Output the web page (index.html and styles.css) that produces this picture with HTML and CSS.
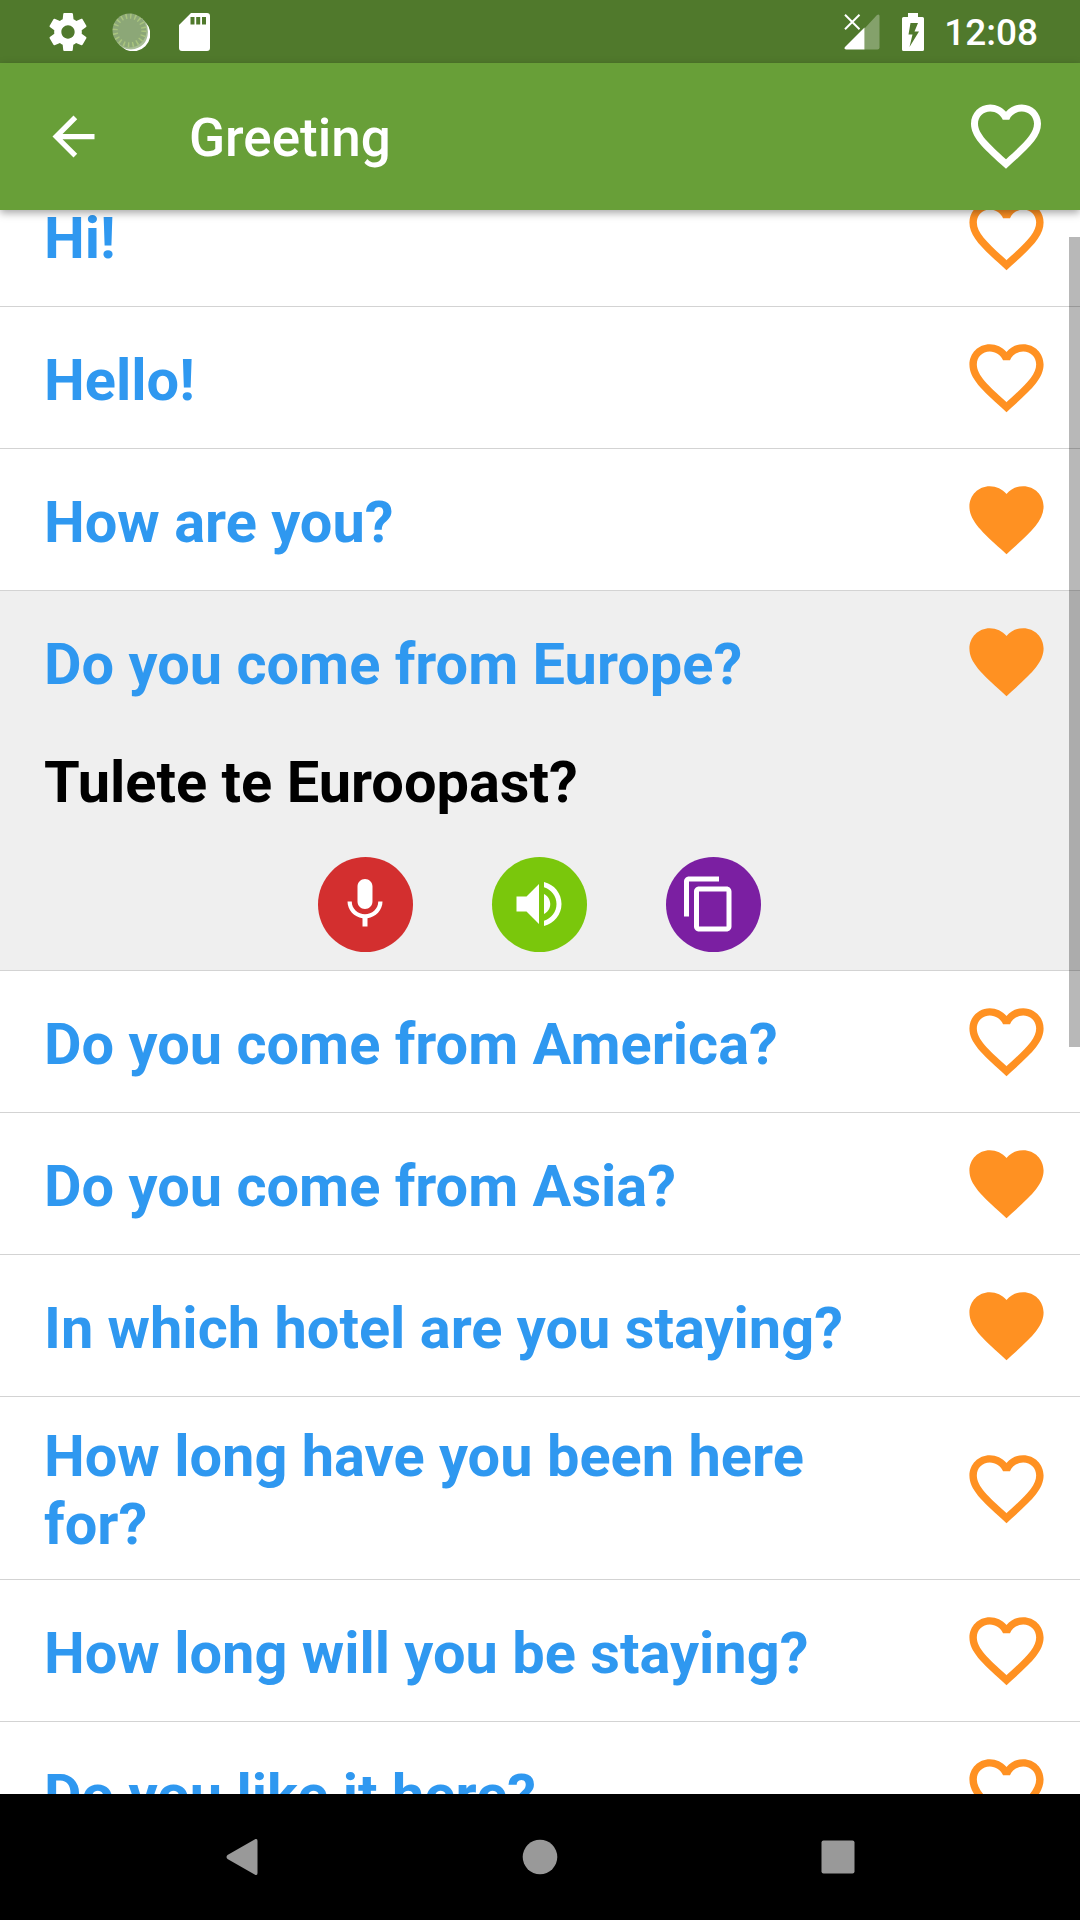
FILE: index.html
```html
<!DOCTYPE html>
<html lang="en">
<head>
    <meta charset="UTF-8">
    <meta name="viewport" content="width=device-width, initial-scale=1.0">
    <title>Greeting</title>
    <link rel="stylesheet" href="styles.css">
</head>
<body>

    <!-- Shared heart icons -->
    <svg class="icon-defs">
        <symbol id="heart-border" viewBox="0 0 24 24">
            <path d="M16.5 3c-1.74 0-3.41.81-4.5 2.09C10.91 3.81 9.24 3 7.5 3 4.42 3 2 5.42 2 8.5c0 3.78 3.4 6.86 8.55 11.54L12 21.35l1.45-1.32C18.6 15.36 22 12.28 22 8.5 22 5.42 19.58 3 16.5 3zm-4.4 15.55l-.1.1-.1-.1C7.14 14.24 4 11.39 4 8.5 4 6.5 5.5 5 7.5 5c1.54 0 3.04.99 3.57 2.36h1.87C13.46 5.99 14.96 5 16.5 5c2 0 3.5 1.5 3.5 3.5 0 2.89-3.14 5.74-7.9 10.05z"/>
        </symbol>
        <symbol id="heart" viewBox="0 0 24 24">
            <path d="M12 21.35l-1.45-1.32C5.4 15.36 2 12.28 2 8.5 2 5.42 4.42 3 7.5 3c1.74 0 3.41.81 4.5 2.09C13.09 3.81 14.76 3 16.5 3 19.58 3 22 5.42 22 8.5c0 3.78-3.4 6.86-8.55 11.54L12 21.35z"/>
        </symbol>
    </svg>

    <div class="screen">
        <!-- Status bar -->
        <div class="status-bar">
            <div class="status-left">
                <svg class="icon-gear" viewBox="2 2 20 20">
                    <path d="M19.2 12.980c.04-.32.07-.64.07-.98s-.03-.66-.07-.98l2.340-1.650c.19-.15.24-.42.12-.64l-2-3.460c-.12-.22-.39-.3-.61-.22l-2.700 1.150c-.4-.35-.9-.65-1.450-.95L14.600 2.420C14.460 2.180 14.250 2 14 2h-4c-.25 0-.46.18-.49.42l-.3 2.830c-.55.3-1.050.6-1.450.95l-2.810-1.150c-.23-.09-.49 0-.61.22l-2 3.460c-.13.22-.07.49.12.64l2.340 1.650c-.04.32-.07.65-.07.98s.03.66.07.98l-2.340 1.650c-.19.15-.24.42-.12.64l2 3.460c.12.22.39.3.61.22l2.810-1.150c.4.35.9.65 1.450.95l.3 2.830c.03.24.24.42.49.42h4c.25 0 .46-.18.49-.42l.3-2.830c.55-.3 1.050-.6 1.450-.95l2.810 1.150c.23.09.49 0 .61-.22l2-3.460c.12-.22.07-.49-.12-.64zM12 15.500c-1.930 0-3.500-1.570-3.500-3.500s1.570-3.500 3.500-3.500 3.500 1.570 3.500 3.500-1.570 3.500-3.500 3.500z"/>
                </svg>
                <svg class="icon-sync" viewBox="0 0 38 38">
                    <circle cx="20" cy="20" r="17.5" fill="#a9bf96"/>
                    <path d="M34 10A17 17 0 0 1 10 34Q14 36.500 19 36.500Q35 35 36 19Q36 14 34 10z" fill="#fff"/>
                    <circle cx="17.5" cy="17.5" r="17" fill="#8ca777"/>
                    <circle cx="17.5" cy="17.5" r="14.3" fill="none" stroke="#a9c47e" stroke-width="5" stroke-dasharray="1.5 3"/>
                </svg>
                <svg class="icon-sd" viewBox="0 0 31 38">
                    <path fill-rule="evenodd" d="M12 0h16a3 3 0 0 1 3 3v32a3 3 0 0 1-3 3H3a3 3 0 0 1-3-3V12zM11.5 4v7.500h4V4zM17.200 4v7.500h4V4zM23 4v7.500h4V4z"/>
                </svg>
            </div>
            <div class="status-right">
                <svg class="icon-signal" viewBox="0 0 36 36">
                    <path d="M35.500 2v31.500a2 2 0 0 1-2 2H20.500V14.500L33 1Q35.500-.5 35.500 2z" opacity=".3"/>
                    <path d="M20.500 13.500v22H2Q-.5 35 1 33z"/>
                    <path d="M1 .8l14.500 14.500M15.500.8L1 15.300" stroke="#fff" stroke-width="2"/>
                </svg>
                <svg class="icon-battery" viewBox="0 0 22 38">
                    <path fill-rule="evenodd" d="M6 0h10v4h4.500Q22 4 22 5.500v31Q22 38 20.500 38h-19Q0 38 0 36.500v-31Q0 4 1.500 4H6zM8.500 10L6.500 21.500h4L7.500 34 17 18.500h-4.500L16 10z"/>
                </svg>
                <span class="clock">12:08</span>
            </div>
        </div>

        <!-- App bar -->
        <div class="app-bar">
            <svg class="icon-back" viewBox="0 0 24 24">
                <path d="M20 11H7.830l5.590-5.590L12 4l-8 8 8 8 1.410-1.410L7.830 13H20v-2z"/>
            </svg>
            <h1 class="title">Greeting</h1>
            <svg class="icon-favorites"><use href="#heart-border"/></svg>
        </div>

        <!-- Phrase list -->
        <div class="content">
            <ul class="phrases">
                <li class="phrase">
                    <div class="phrase-row"><span class="phrase-text">Hi!</span><svg class="like"><use href="#heart-border"/></svg></div>
                </li>
                <li class="phrase">
                    <div class="phrase-row"><span class="phrase-text">Hello!</span><svg class="like"><use href="#heart-border"/></svg></div>
                </li>
                <li class="phrase">
                    <div class="phrase-row"><span class="phrase-text">How are you?</span><svg class="like"><use href="#heart"/></svg></div>
                </li>
                <li class="phrase open">
                    <div class="phrase-row"><span class="phrase-text">Do you come from Europe?</span><svg class="like"><use href="#heart"/></svg></div>
                    <div class="translation">Tulete te Euroopast?</div>
                    <div class="actions">
                        <div class="action record">
                            <svg viewBox="0 0 24 24"><path d="M12 14c1.660 0 2.990-1.340 2.990-3L15 5c0-1.660-1.340-3-3-3S9 3.340 9 5v6c0 1.660 1.340 3 3 3zm5.300-3c0 3-2.540 5.100-5.300 5.100S6.700 14 6.700 11H5c0 3.410 2.720 6.230 6 6.720V21h2v-3.280c3.280-.48 6-3.300 6-6.720h-1.700z"/></svg>
                        </div>
                        <div class="action speak">
                            <svg viewBox="0 0 24 24"><path d="M3 9v6h4l5 5V4L7 9H3zm13.500 3c0-1.770-1.020-3.290-2.500-4.030v8.050c1.480-.73 2.500-2.250 2.500-4.020zM14 3.230v2.060c2.890.86 5 3.540 5 6.710s-2.110 5.850-5 6.710v2.060c4.010-.91 7-4.490 7-8.770s-2.990-7.860-7-8.770z"/></svg>
                        </div>
                        <div class="action copy">
                            <svg viewBox="0 0 24 24"><path d="M16 1H4c-1.100 0-2 .9-2 2v14h2V3h12V1zm3 4H8c-1.100 0-2 .9-2 2v14c0 1.100.9 2 2 2h11c1.100 0 2-.9 2-2V7c0-1.100-.9-2-2-2zm0 16H8V7h11v14z"/></svg>
                        </div>
                    </div>
                </li>
                <li class="phrase">
                    <div class="phrase-row"><span class="phrase-text">Do you come from America?</span><svg class="like"><use href="#heart-border"/></svg></div>
                </li>
                <li class="phrase">
                    <div class="phrase-row"><span class="phrase-text">Do you come from Asia?</span><svg class="like"><use href="#heart"/></svg></div>
                </li>
                <li class="phrase">
                    <div class="phrase-row"><span class="phrase-text">In which hotel are you staying?</span><svg class="like"><use href="#heart"/></svg></div>
                </li>
                <li class="phrase">
                    <div class="phrase-row"><span class="phrase-text">How long have you been here for?</span><svg class="like"><use href="#heart-border"/></svg></div>
                </li>
                <li class="phrase">
                    <div class="phrase-row"><span class="phrase-text">How long will you be staying?</span><svg class="like"><use href="#heart-border"/></svg></div>
                </li>
                <li class="phrase">
                    <div class="phrase-row"><span class="phrase-text">Do you like it here?</span><svg class="like"><use href="#heart-border"/></svg></div>
                </li>
            </ul>
            <div class="scroll-thumb"></div>
        </div>

        <!-- Navigation bar -->
        <div class="nav-bar">
            <div class="nav-item">
                <svg viewBox="0 0 36 36"><path d="M31.500 0Q33.500-.3 33.500 2v32q0 2.300-2 2L3.500 20q-2-2 0-4z"/></svg>
            </div>
            <div class="nav-item">
                <svg viewBox="0 0 36 36"><circle cx="18" cy="18" r="17.300"/></svg>
            </div>
            <div class="nav-item">
                <svg viewBox="0 0 36 36"><rect x="1.500" y="1.500" width="33" height="33" rx="2"/></svg>
            </div>
        </div>
    </div>

</body>
</html>
```

FILE: styles.css
```css
* {
    box-sizing: border-box;
}

body {
    margin: 0;
    font-family: Roboto, sans-serif;
    background-color: #fff;
}

svg {
    display: block;
    flex: none;
    fill: #fff;
}

.icon-defs {
    display: none;
}

.screen {
    display: flex;
    flex-direction: column;
    width: 1080px;
    height: 1920px;
    overflow: hidden;
}

/* Status bar */
.status-bar {
    display: flex;
    justify-content: space-between;
    height: 63px;
    padding: 0 42px 0 49px;
    background-color: #50792c;
}

.status-left,
.status-right {
    display: flex;
    align-items: center;
}

.icon-gear {
    width: 38px;
    height: 38px;
    margin-right: 25px;
}

.icon-sync {
    width: 38px;
    height: 38px;
    margin-right: 29px;
}

.icon-sd {
    width: 31px;
    height: 38px;
}

.icon-signal {
    width: 36px;
    height: 36px;
    margin: 1px 22px 0 0;
}

.icon-battery {
    width: 22px;
    height: 38px;
    margin-right: 20px;
}

.clock {
    color: #fff;
    font-size: 37px;
    font-weight: 500;
    line-height: 63px;
    padding-top: 2px;
}

/* App bar */
.app-bar {
    display: flex;
    align-items: center;
    height: 147px;
    padding: 0 32px 0 42px;
    background-color: #689f38;
    box-shadow: 0 3px 8px rgba(0, 0, 0, 0.35);
    position: relative;
    z-index: 1;
}

.icon-back {
    width: 63px;
    height: 63px;
}

.title {
    flex: 1;
    margin: 2px 0 0 84px;
    color: #fff;
    font-size: 53px;
    font-weight: 500;
    line-height: 62px;
}

.icon-favorites {
    width: 84px;
    height: 84px;
    margin-bottom: 2px;
}

/* Phrase list */
.content {
    flex: 1;
    min-height: 0;
    overflow: hidden;
    position: relative;
}

/* the list is scrolled down a little */
.phrases {
    list-style: none;
    margin: -45px 0 0;
    padding: 0;
}

.phrase {
    border-bottom: 1px solid #d3d3d3;
}

.phrase.open {
    background-color: #efefef;
}

.phrase-row {
    display: flex;
    align-items: center;
    min-height: 141px;
    padding: 20px 29px 20px 44px;
}

.phrase-text,
.translation {
    font-size: 57.75px;
    font-weight: 700;
    line-height: 68px;
}

.phrase-text {
    flex: 1;
    padding: 5px 0 1px;
    margin-right: 70px;
    color: #2f98f0;
}

.like {
    width: 89px;
    height: 89px;
    fill: #ff9122;
}

.translation {
    padding: 16px 44px 0;
    color: #000;
}

.actions {
    display: flex;
    justify-content: center;
    gap: 79px;
    padding: 41px 1px 18px 0;
}

.action {
    display: flex;
    align-items: center;
    justify-content: center;
    width: 95px;
    height: 95px;
    padding: 0 1px 1px 0;
    border-radius: 50%;
}

.action svg {
    width: 60px;
    height: 60px;
}

.record {
    background-color: #d32f2f;
}

.speak {
    background-color: #7ac70c;
}

.copy {
    background-color: #7b1fa2;
    padding-right: 9px;
}

.scroll-thumb {
    position: absolute;
    top: 27px;
    right: 0;
    width: 11px;
    height: 810px;
    background-color: rgba(0, 0, 0, 0.28);
}

/* Navigation bar */
.nav-bar {
    display: flex;
    justify-content: center;
    height: 126px;
    padding-right: 1px;
    background-color: #000;
}

.nav-item {
    display: flex;
    align-items: center;
    justify-content: center;
    width: 298px;
}

.nav-item svg {
    width: 36px;
    height: 36px;
    fill: #999;
}
```
